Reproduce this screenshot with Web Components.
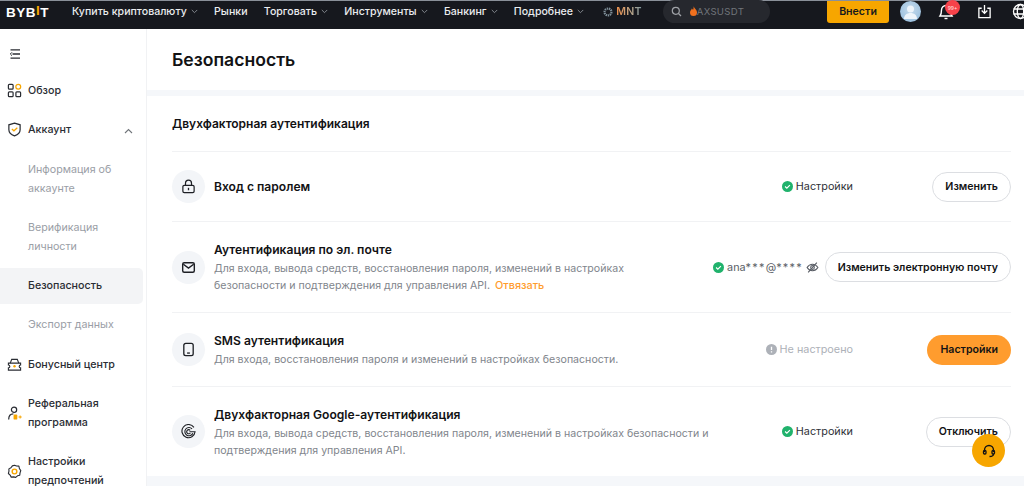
<!DOCTYPE html>
<html lang="ru">
<head>
<meta charset="utf-8">
<title>Безопасность</title>
<style>
  html, body { margin: 0; padding: 0; height: 486px; overflow: hidden; background: #fff; }
  body { font-family: Inter, "Noto Sans", sans-serif; color: #121214; display: flex; flex-direction: column; }
  .page { display: flex; flex: 1; min-height: 0; }
  security-row b { color: #ff9c2e; font-weight: 500; font-size: 10.900px; margin-left: 2px; }
</style>
</head>
<body>
<top-bar></top-bar>
<div class="page">
  <side-menu>
    <menu-item icon="overview" strong>Обзор</menu-item>
    <menu-item icon="shield" strong open>Аккаунт</menu-item>
    <menu-item sub>Информация об<br>аккаунте</menu-item>
    <menu-item sub>Верификация<br>личности</menu-item>
    <menu-item sub active>Безопасность</menu-item>
    <menu-item sub>Экспорт данных</menu-item>
    <menu-item icon="bonus" strong>Бонусный центр</menu-item>
    <menu-item icon="ref" strong>Реферальная<br>программа</menu-item>
    <menu-item icon="gear" strong>Настройки<br>предпочтений</menu-item>
  </side-menu>
  <security-page>
    <security-row icon="lock" state="ok" status="Настройки" action="Изменить" style="--row-h:69px">Вход с паролем</security-row>
    <security-row icon="mail" state="ok" status="ana***@****" eye action="Изменить электронную почту" style="--row-h:90px;--text-pad:2px">
      Аутентификация по эл. почте
      <span slot="desc">Для входа, вывода средств, восстановления пароля, изменений в настройках<br>безопасности и подтверждения для управления API. <b>Отвязать</b></span>
    </security-row>
    <security-row icon="phone" state="off" status="Не настроено" action="Настройки" primary style="--row-h:73px;--text-pad:2px">
      SMS аутентификация
      <span slot="desc">Для входа, восстановления пароля и изменений в настройках безопасности.</span>
    </security-row>
    <security-row icon="google" state="ok" status="Настройки" action="Отключить" last style="--row-h:89px;--text-pad:2px">
      Двухфакторная Google-аутентификация
      <span slot="desc">Для входа, вывода средств, восстановления пароля, изменений в настройках безопасности и<br>подтверждения для управления API.</span>
    </security-row>
  </security-page>
</div>
<help-fab></help-fab>

<script>
const ICONS = {
  overview: '<g fill="none" stroke="#2a2d33" stroke-width="1.300"><rect x="1.500" y="1.500" width="5" height="5" rx="1"/><rect x="1.500" y="9.500" width="5" height="5" rx="1"/><rect x="9.500" y="9.500" width="5" height="5" rx="1"/><circle cx="12" cy="4" r="2.600" stroke="#f7a600"/></g>',
  shield: '<path d="M8 1.200 14 3v5.200c0 3.300-2.600 5.400-6 6.600-3.400-1.200-6-3.300-6-6.600V3z" fill="none" stroke="#2a2d33" stroke-width="1.300"/><path d="M5.200 7.400 7.400 9.400 11 6.200" fill="none" stroke="#f7a600" stroke-width="1.300"/>',
  bonus: '<g fill="none" stroke="#2a2d33" stroke-width="1.200"><path d="M1.500 6.500h13v2a1.500 1.500 0 0 0 0 3v2.500h-13v-2.500a1.500 1.500 0 0 0 0-3z"/><path d="M3.500 6.500 5 2.500h6l1.500 4"/></g><circle cx="8" cy="9.800" r="1.300" fill="#f7a600"/>',
  ref: '<g fill="none" stroke="#2a2d33" stroke-width="1.300"><circle cx="7.500" cy="4" r="2.800"/><path d="M1.800 14.500c0-3.500 1.800-6 5-6"/></g><rect x="7" y="9" width="4" height="5.500" rx="1" fill="#f7a600"/><path d="M12.300 11.700h3.400M14 10v3.400" stroke="#f7a600" stroke-width="1.100"/>',
  gear: '<path d="M8 1.300 10.200 2.200 12.700 2.300 13.200 4.800 14.700 7 13.900 9.400 13.600 12 11.200 12.600 9.300 14.300 7 13.700 4.500 14 3.300 11.800 1.500 10.100 2.100 7.700 2 5.200 4.200 4 5.700 2z" fill="none" stroke="#2a2d33" stroke-width="1.200" stroke-linejoin="round"/><circle cx="8" cy="8" r="2.500" fill="none" stroke="#f7a600" stroke-width="1.500"/>',
  lock: '<g fill="none" stroke="#1d1f24" stroke-width="1.300"><rect x="2" y="6.800" width="12" height="7.700" rx="1.500"/><path d="M4.800 6.800V4.500a3.200 3.200 0 0 1 6.400 0v2.300"/></g><rect x="7.300" y="9.400" width="1.400" height="2.600" fill="#1d1f24"/>',
  mail: '<rect x="1.800" y="3" width="12.400" height="10" rx="1.600" fill="none" stroke="#1d1f24" stroke-width="1.500"/><path d="M2.500 4.500 8 8.700l5.500-4.200" fill="none" stroke="#1d1f24" stroke-width="1.500"/>',
  phone: '<rect x="3" y="1.500" width="10" height="13" rx="2" fill="none" stroke="#1d1f24" stroke-width="1.400"/><path d="M6.500 11.800h3" stroke="#1d1f24" stroke-width="1.400"/>',
  google: '<g fill="none" stroke="#1d1f24" stroke-width="1.200"><path d="M13.800 3.600A7 7 0 1 0 15 8.200H9"/><path d="M11.800 5.200A4.400 4.400 0 1 0 12.600 9.800"/><path d="M9.800 6.700A2.200 2.200 0 1 0 10 9.600"/></g>'
};

const chevron = '<svg width="7" height="5" viewBox="0 0 9 6"><path d="M1 1l3.500 3.500L8 1" fill="none" stroke="#8a8e94" stroke-width="1.200"/></svg>';

const topBarTpl = document.createElement('template');
topBarTpl.innerHTML = `
<style>
  :host { display: flex; align-items: center; height: 21px; padding-bottom: 7px; flex: none; background: #16181e; border-top: 1px solid #8a9099; color: #eaecef; font-size: 10.600px; font-weight: 500; white-space: nowrap; }
  .logo { font: 700 13.500px/1 "Liberation Sans", sans-serif; letter-spacing: .5px; color: #fff; width: 43px; margin: 2px 23px 0 6px; display: flex; }
  .logo i { font-style: normal; color: #f7a600; transform: translateY(-2px); }
  nav { display: flex; align-items: center; }
  nav span { display: flex; align-items: center; gap: 4px; margin-right: 16.300px; }
  nav svg { display: block; }
  .mnt { display: flex; align-items: center; gap: 3px; margin-left: 3px; font-weight: 600; letter-spacing: .2px; }
  .mnt b { font-weight: 600; background: linear-gradient(90deg, #ef8f4a, #b8a58a 60%, #7f9aa3); -webkit-background-clip: text; background-clip: text; color: transparent; }
  .search { display: flex; align-items: center; width: 107px; height: 23px; margin: -1px 0 0 21px; background: #26282e; border-radius: 12px; color: #71757a; font-size: 9.600px; font-weight: 400; letter-spacing: .3px; box-sizing: border-box; padding-left: 8px; gap: 8px; }
  .right { display: flex; align-items: center; margin-left: auto; margin-right: -5px; }
  .deposit { width: 62px; height: 22px; align-self: flex-start; background: #f7a600; border-radius: 0 0 3px 3px; color: #16181e; font-weight: 600; font-size: 10.600px; display: flex; align-items: center; justify-content: center; }
  .avatar { width: 21px; height: 21px; border-radius: 50%; background: radial-gradient(circle at 50% 40%, #c6dcee, #8fb8d9); margin-left: 11px; overflow: hidden; }
  .bell { position: relative; margin-left: 17px; width: 16px; height: 16px; }
  .badge { position: absolute; left: 7px; bottom: 5px; width: 15px; height: 15px; border-radius: 50%; background: #f6424a; color: #ffd9da; font-size: 5px; display: flex; justify-content: center; align-items: flex-end; box-sizing: border-box; padding-bottom: 4px; }
  .badge span { line-height: 6px; }
  .dl { margin-left: 23px; display: block; }
  .globe { margin-left: 20px; display: block; }
</style>
<div class="logo">BYB<i>I</i>T</div>
<nav>
  <span>Купить криптовалюту ${chevron}</span>
  <span>Рынки</span>
  <span>Торговать ${chevron}</span>
  <span>Инструменты ${chevron}</span>
  <span>Банкинг ${chevron}</span>
  <span>Подробнее ${chevron}</span>
</nav>
<div class="mnt"><svg width="10" height="10" viewBox="0 0 11 11"><circle cx="5.500" cy="5.500" r="3.800" fill="none" stroke="#7f8f99" stroke-width="2.400" stroke-dasharray="1.500 .8"/></svg><b>MNT</b></div>
<div class="search">
  <svg width="11" height="11" viewBox="0 0 11 11"><circle cx="4.800" cy="4.800" r="3.500" fill="none" stroke="#a0a3a8" stroke-width="1.200"/><path d="M7.500 7.500 10 10" stroke="#a0a3a8" stroke-width="1.200"/></svg>
  <span style="display:flex;align-items:center"><svg width="7" height="10" viewBox="0 0 7 10"><path d="M3.500 0C4 2 7 3.500 7 6.500A3.500 3.500 0 0 1 0 6.500C0 4.500 1.500 4 1.800 2.500 2.500 3 2.800 3.500 3 4 3.500 3 3.800 1.500 3.500 0z" fill="#f0701e"/></svg>AXSUSDT</span>
</div>
<div class="right">
  <div class="deposit">Внести</div>
  <div class="avatar"><svg width="21" height="21" viewBox="0 0 21 21"><circle cx="10.500" cy="8" r="3.500" fill="#eef5fb"/><path d="M4 18c0-4 3-6 6.500-6s6.500 2 6.500 6z" fill="#eef5fb"/></svg></div>
  <div class="bell">
    <svg width="16" height="16" viewBox="0 0 16 16"><path d="M8 1.500a4.500 4.500 0 0 0-4.500 4.500c0 4-1.500 6-1.500 6h12s-1.500-2-1.500-6A4.500 4.500 0 0 0 8 1.500z" fill="none" stroke="#fff" stroke-width="1.400"/><path d="M6.500 14.500h3" stroke="#fff" stroke-width="1.400"/></svg>
    <div class="badge"><span>99+</span></div>
  </div>
  <svg class="dl" width="15" height="15" viewBox="0 0 16 16"><path d="M5 4.500H2V14.500H14V4.500H11" fill="none" stroke="#fff" stroke-width="1.400"/><path d="M8 1v8.500M5 7l3 3 3-3" fill="none" stroke="#fff" stroke-width="1.400"/></svg>
  <svg class="globe" width="17" height="17" viewBox="0 0 17 17"><g fill="none" stroke="#fff" stroke-width="1.300"><circle cx="8.500" cy="8.500" r="7"/><ellipse cx="8.500" cy="8.500" rx="3.200" ry="7"/><path d="M1.500 6h14M1.500 11h14"/></g></svg>
</div>`;

class TopBar extends HTMLElement {
  constructor() {
    super();
    this.attachShadow({mode: 'open'});
    this.shadowRoot.appendChild(topBarTpl.content.cloneNode(true));
  }
}
customElements.define('top-bar', TopBar);

const sideTpl = document.createElement('template');
sideTpl.innerHTML = `
<style>
  :host { display: block; width: 147px; flex: none; box-sizing: border-box; border-right: 1px solid #f1f2f4; padding-right: 3px; overflow: hidden; }
  .burger { display: block; margin: 19px 0 12.500px 9px; }
</style>
<svg class="burger" width="12" height="12" viewBox="0 0 12 12"><path d="M1.500 1.800h9.500M3.500 6H11M1.500 10.200h9.500" stroke="#2a2d33" stroke-width="1.300" fill="none"/><path d="M3 4.300 1.300 6 3 7.700" stroke="#2a2d33" fill="none"/></svg>
<slot></slot>`;

class SideMenu extends HTMLElement {
  constructor() {
    super();
    this.attachShadow({mode: 'open'});
    this.shadowRoot.appendChild(sideTpl.content.cloneNode(true));
  }
}
customElements.define('side-menu', SideMenu);

class MenuItem extends HTMLElement {
  constructor() {
    super();
    this.attachShadow({mode: 'open'});
    const icon = this.getAttribute('icon');
    this.shadowRoot.innerHTML = `
<style>
  :host { display: flex; align-items: center; position: relative; padding: 8.500px 0 8.500px 28px; margin-bottom: 3.300px; font-size: 10.700px; line-height: 19px; color: #9a9ea6; border-radius: 0 5px 5px 0; }
  :host([strong]) { color: #2a2d33; font-weight: 500; }
  :host([active]) { background: #f3f4f6; color: #2a2d33; font-weight: 500; }
  svg.ic { position: absolute; left: 6.500px; top: 50%; margin-top: -7.500px; }
  svg.ch { position: absolute; right: 10px; top: 50%; margin-top: -2px; }
</style>
${icon ? `<svg class="ic" width="15" height="15" viewBox="0 0 16 16">${ICONS[icon]}</svg>` : ''}
<div><slot></slot></div>
${this.hasAttribute('open') ? '<svg class="ch" width="9" height="6" viewBox="0 0 9 6"><path d="M1 5l3.500-3.500L8 5" fill="none" stroke="#71757a" stroke-width="1.100"/></svg>' : ''}`;
  }
}
customElements.define('menu-item', MenuItem);

const secTpl = document.createElement('template');
secTpl.innerHTML = `
<style>
  :host { display: block; flex: 1; min-width: 0; background: #f5f7fa; }
  header { height: 60px; padding-bottom: 1px; background: #fff; padding-left: 25px; display: flex; align-items: center; font-size: 17.600px; font-weight: 600; color: #121214; }
  section { margin-top: 6px; height: 380px; background: #fff; padding: 0 13px 0 25px; box-sizing: border-box; }
  h2 { margin: 0; height: 55px; display: flex; align-items: center; font-size: 12px; font-weight: 600; color: #121214; box-sizing: border-box; }
</style>
<header>Безопасность</header>
<section>
  <h2>Двухфакторная аутентификация</h2>
  <slot></slot>
</section>`;

class SecurityPage extends HTMLElement {
  constructor() {
    super();
    this.attachShadow({mode: 'open'});
    this.shadowRoot.appendChild(secTpl.content.cloneNode(true));
  }
}
customElements.define('security-page', SecurityPage);

class SecurityRow extends HTMLElement {
  constructor() {
    super();
    this.attachShadow({mode: 'open'});
    const ok = this.getAttribute('state') === 'ok';
    const primary = this.hasAttribute('primary');
    const eye = this.hasAttribute('eye');
    const status = this.getAttribute('status').replace(/\*+/g, m => `<i>${m}</i>`);
    this.shadowRoot.innerHTML = `
<style>
  :host { display: flex; align-items: center; height: var(--row-h); border-top: 1px solid #f1f2f4; }
  .circle { width: 33px; height: 33px; border-radius: 50%; background: #f3f5f8; display: flex; align-items: center; justify-content: center; flex: none; margin-right: 9px; }
  .text { flex: 1; min-width: 0; font-size: 12.100px; font-weight: 600; color: #121214; padding-top: var(--text-pad, 0); }
  ::slotted([slot=desc]) { display: block; margin-top: 3px; font-size: 10.600px; line-height: 17px; font-weight: 400; color: #81858c; }
  .status { display: flex; align-items: center; gap: 3px; font-size: 10.800px; color: ${ok ? '#2f3238' : '#adb1b8'}; white-space: nowrap; }
  .mask { color: #5a5e66; }
  .mask i { font-style: normal; letter-spacing: 1.300px; }
  .action { flex: none; display: flex; justify-content: flex-end; }
  .dot { width: 11px; height: 11px; display: block; flex: none; }
  button { font: 600 10.600px Inter, sans-serif; height: 30px; border-radius: 15px; padding: 0 12px; white-space: nowrap; color: #121214; background: ${primary ? '#ff9c2e' : '#fff'}; border: 1px solid ${primary ? 'transparent' : '#dcdee2'}; box-sizing: border-box; background-clip: border-box; }
</style>
<div class="circle"><svg width="15" height="15" viewBox="0 0 16 16">${ICONS[this.getAttribute('icon')]}</svg></div>
<div class="text"><slot></slot><slot name="desc"></slot></div>
<div class="status">
  ${ok
    ? '<svg class="dot" viewBox="0 0 10 10"><circle cx="5" cy="5" r="5" fill="#20b26c"/><path d="M2.800 5 4.400 6.500 7.200 3.800" fill="none" stroke="#fff" stroke-width="1.100"/></svg>'
    : '<svg class="dot" viewBox="0 0 10 10"><circle cx="5" cy="5" r="5" fill="#adb1b8"/><path d="M5 2.500v3M5 6.700v1" stroke="#fff" stroke-width="1.200"/></svg>'}
  <span class="${eye ? 'mask' : ''}">${status}</span>
  ${eye ? '<svg width="13" height="11" viewBox="0 0 12 10"><path d="M1 5c2.500-4 7.500-4 10 0-2.500 4-7.500 4-10 0z" fill="none" stroke="#5a5e66"/><circle cx="6" cy="5" r="1.700" fill="none" stroke="#5a5e66"/><path d="M2 9.500 10 .5" stroke="#5a5e66"/></svg>' : ''}
</div>
<div class="action" style="width:${eye ? 192 : 158}px"><button>${this.getAttribute('action')}</button></div>`;
  }
}
customElements.define('security-row', SecurityRow);

class HelpFab extends HTMLElement {
  constructor() {
    super();
    this.attachShadow({mode: 'open'});
    this.shadowRoot.innerHTML = `
<style>
  :host { position: fixed; left: 972px; top: 434px; width: 33px; height: 33px; border-radius: 50%; background: #f7a600; display: flex; align-items: center; justify-content: center; }
</style>
<svg width="14" height="14" viewBox="0 0 14 14" fill="none" stroke="#121214" stroke-width="1.300"><path d="M2.500 8V6a4.500 4.500 0 0 1 9 0v2"/><rect x="1.500" y="6.500" width="2.500" height="3.500" rx="1"/><rect x="10" y="6.500" width="2.500" height="3.500" rx="1"/><path d="M11.500 10c0 2-2 2.500-4 2.500"/></svg>`;
  }
}
customElements.define('help-fab', HelpFab);
</script>
</body>
</html>
